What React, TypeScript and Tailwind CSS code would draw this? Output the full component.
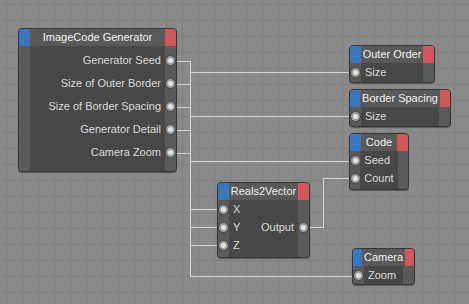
import React from "react";

type Row = { left?: string; right?: string; inPort?: boolean; outPort?: boolean };

type NodeProps = {
  pos: string;
  title: string;
  rows: Row[];
  big?: boolean;
};

const Port = () => (
  <div className="w-[9px] h-[9px] rounded-full bg-[#e4e4e4] border-[2px] border-[#9c9c9c] shadow-[0_0_0_1px_#4a4a4a]" />
);

const Node = ({ pos, title, rows, big }: NodeProps) => {
  const rowH = big ? "h-[23px]" : "h-[18px]";
  return (
    <div
      className={`absolute ${pos} flex flex-col rounded-[4px] overflow-hidden border border-[#363636] bg-[#474747] shadow-[0_1px_1px_rgba(0,0,0,0.35)]`}
    >
      <div className="flex h-[17px] shrink-0 bg-[#595959]">
        <div className="w-[11px] bg-[#3b76bd]" />
        <div className="flex-1 text-center text-[11px] leading-[17px] text-[#f2f2f2] px-[2px] whitespace-nowrap">
          {title}
        </div>
        <div className="w-[11px] bg-[#d0585b]" />
      </div>
      <div className="flex flex-1">
        <div className={`w-[11px] bg-[#5a5a5a] flex flex-col ${big ? "pt-[3px]" : ""}`}>
          {rows.map((r, i) => (
            <div key={i} className={`${rowH} flex items-center justify-center`}>
              {r.inPort && <Port />}
            </div>
          ))}
        </div>
        <div className={`flex-1 flex flex-col ${big ? "pt-[3px]" : ""}`}>
          {rows.map((r, i) => (
            <div
              key={i}
              className={`${rowH} flex items-center justify-between px-[4px] text-[11px] text-[#dcdcdc] whitespace-nowrap`}
            >
              <span>{r.left}</span>
              <span>{r.right}</span>
            </div>
          ))}
        </div>
        <div className={`w-[11px] bg-[#5a5a5a] flex flex-col ${big ? "pt-[3px]" : ""}`}>
          {rows.map((r, i) => (
            <div key={i} className={`${rowH} flex items-center justify-center`}>
              {r.outPort && <Port />}
            </div>
          ))}
        </div>
      </div>
    </div>
  );
};

const Wires = () => (
  <svg className="absolute inset-0" width="469" height="304" shapeRendering="crispEdges">
    <g stroke="#d4d4d4" strokeWidth="1" fill="none">
      {/* generator outputs into the bus */}
      <path d="M177 61.5H190.5M177 84.5H190.5M177 107.5H190.5M177 130.5H190.5M177 153.5H190.5" />
      <path d="M190.5 61.5V276.5" />
      <path d="M190.5 72.5H352M190.5 116.5H352M190.5 161.5H352" />
      <path d="M190.5 209.5H220M190.5 227.5H220M190.5 245.5H220" />
      <path d="M190.5 276.5H355" />
      {/* reals output to code count */}
      <path d="M309 227.5H323.5V178.5H352" />
    </g>
  </svg>
);

export default function App() {
  return (
    <div
      className="relative w-[469px] h-[304px] overflow-hidden bg-[#8a8a8a] bg-[linear-gradient(to_right,#808080_1px,transparent_1px),linear-gradient(to_bottom,#808080_1px,transparent_1px)] bg-[size:16px_16px] bg-[position:6px_4px]"
      style={{ fontFamily: '"Liberation Sans", Arial, sans-serif' }}
    >
      <Wires />
      <Node
        big
        pos="left-[18px] top-[28px] w-[159px] h-[144px]"
        title="ImageCode Generator"
        rows={[
          { right: "Generator Seed", outPort: true },
          { right: "Size of Outer Border", outPort: true },
          { right: "Size of Border Spacing", outPort: true },
          { right: "Generator Detail", outPort: true },
          { right: "Camera Zoom", outPort: true },
        ]}
      />
      <Node
        pos="left-[349px] top-[45px] w-[86px] h-[38px]"
        title="Outer Order"
        rows={[{ left: "Size", inPort: true }]}
      />
      <Node
        pos="left-[349px] top-[89px] w-[102px] h-[38px]"
        title="Border Spacing"
        rows={[{ left: "Size", inPort: true }]}
      />
      <Node
        pos="left-[349px] top-[133px] w-[60px] h-[57px]"
        title="Code"
        rows={[
          { left: "Seed", inPort: true },
          { left: "Count", inPort: true },
        ]}
      />
      <Node
        pos="left-[217px] top-[182px] w-[93px] h-[76px]"
        title="Reals2Vector"
        rows={[
          { left: "X", inPort: true },
          { left: "Y", right: "Output", inPort: true, outPort: true },
          { left: "Z", inPort: true },
        ]}
      />
      <Node
        pos="left-[352px] top-[248px] w-[63px] h-[37px]"
        title="Camera"
        rows={[{ left: "Zoom", inPort: true }]}
      />
    </div>
  );
}
